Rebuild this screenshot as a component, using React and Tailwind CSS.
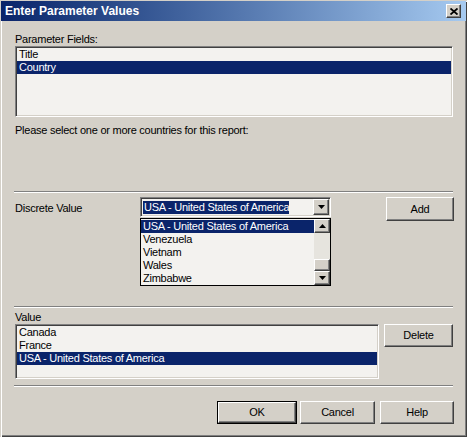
import React from "react";

const raised =
  "bg-[#d4d0c8] border border-t-white border-l-white border-r-[#404040] border-b-[#404040] shadow-[inset_-1px_-1px_0_#808080]";
const sunken =
  "border border-t-[#808080] border-l-[#808080] border-r-white border-b-white shadow-[inset_1px_1px_0_#404040,inset_-1px_-1px_0_#d4d0c8]";

function Separator({ className = "" }) {
  return <div className={`ml-[14px] w-[439px] h-[2px] border-t border-t-[#808080] border-b border-b-white ${className}`} />;
}

function Button({ children, className = "", isDefault = false }) {
  if (isDefault) {
    return (
      <div className={`border border-black ${className}`}>
        <div className={`${raised} h-full flex items-center justify-center`}>{children}</div>
      </div>
    );
  }
  return <div className={`${raised} flex items-center justify-center ${className}`}>{children}</div>;
}

function Row({ children, selected = false }) {
  return (
    <div className={`h-[13px] leading-[13px] pl-[2px] whitespace-nowrap ${selected ? "bg-[#0a246a] text-white" : ""}`}>
      {children}
    </div>
  );
}

function Arrow({ up = false }) {
  return (
    <svg width="7" height="4" viewBox="0 0 7 4">
      <path d={up ? "M3.5 0L7 4H0z" : "M0 0h7L3.5 4z"} fill="#000" />
    </svg>
  );
}

export default function App() {
  return (
    <div
      className="relative w-[467px] h-[437px] bg-[#d4d0c8] text-black text-[11px] tracking-[-0.25px] shadow-[inset_1px_1px_0_#d4d0c8,inset_2px_2px_0_#fff,inset_-1px_-1px_0_#404040,inset_-2px_-2px_0_#808080] flex flex-col"
      style={{ fontFamily: '"Liberation Sans", Arial, sans-serif' }}
    >
      {/* title bar */}
      <div className="mt-[1px] mx-[1px] h-[20px] bg-gradient-to-r from-[#0a246a] to-[#a6caf0] flex items-center justify-between pl-[4px] pr-[5px]">
        <span className="text-white font-bold text-[12px] tracking-normal">Enter Parameter Values</span>
        <div className={`${raised} w-[15px] h-[14px] flex items-center justify-center`}>
          <svg width="8" height="7" viewBox="0 0 8 7">
            <path d="M0.5 0.5L7.5 6.5M7.5 0.5L0.5 6.5" stroke="#000" strokeWidth="1.8" />
          </svg>
        </div>
      </div>

      <div className="mt-[12px] ml-[15px] h-[13px] leading-[13px]">Parameter Fields:</div>
      <div className={`ml-[15px] w-[438px] h-[71px] bg-[#f3f2ef] ${sunken} pt-[1px] px-[1px]`}>
        <Row>Title</Row>
        <Row selected>Country</Row>
      </div>

      <div className="mt-[7px] ml-[15px] h-[13px] leading-[13px]">Please select one or more countries for this report:</div>

      <Separator className="mt-[54px]" />

      <div className="mt-[4px] flex items-start">
        <div className="ml-[15px] mt-[5px] w-[125px] h-[13px] leading-[13px]">Discrete Value</div>
        <div className="relative w-[191px]">
          <div className={`h-[20px] bg-[#f3f2ef] ${sunken} flex items-stretch p-[1px]`}>
            <div className="flex-1 flex items-center pl-[1px]">
              <span className="bg-[#0a246a] text-white h-[13px] leading-[13px] pl-[1px] whitespace-nowrap">USA - United States of America</span>
            </div>
            <div className={`${raised} w-[16px] flex items-center justify-center`}>
              <Arrow />
            </div>
          </div>
          <div className="absolute left-0 top-[21px] w-[191px] h-[68px] border border-black bg-[#f3f2ef] flex">
            <div className="flex-1 pt-[1px]">
              <Row selected>USA - United States of America</Row>
              <Row>Venezuela</Row>
              <Row>Vietnam</Row>
              <Row>Wales</Row>
              <Row>Zimbabwe</Row>
            </div>
            <div className="w-[16px] flex flex-col bg-[#e6e4de]">
              <div className={`${raised} h-[14px] flex items-center justify-center`}>
                <Arrow up />
              </div>
              <div className="flex-1 flex flex-col justify-end">
                <div className={`${raised} h-[12px]`} />
              </div>
              <div className={`${raised} h-[14px] flex items-center justify-center`}>
                <Arrow />
              </div>
            </div>
          </div>
        </div>
        <Button className="ml-[55px] w-[68px] h-[24px]">Add</Button>
      </div>

      <Separator className="mt-[85px]" />

      <div className="mt-[3px] ml-[15px] h-[13px] leading-[13px]">Value</div>
      <div className="flex items-start">
        <div className={`ml-[15px] w-[364px] h-[55px] bg-[#f3f2ef] ${sunken} pt-[1px] px-[1px]`}>
          <Row>Canada</Row>
          <Row>France</Row>
          <Row selected>USA - United States of America</Row>
        </div>
        <Button className="ml-[5px] w-[69px] h-[23px]">Delete</Button>
      </div>

      <Separator className="mt-[6px]" />

      <div className="mt-[14px] flex">
        <Button isDefault className="ml-[217px] w-[80px] h-[23px]">OK</Button>
        <Button className="ml-[3px] w-[75px] h-[23px]">Cancel</Button>
        <Button className="ml-[5px] w-[74px] h-[23px]">Help</Button>
      </div>
    </div>
  );
}
